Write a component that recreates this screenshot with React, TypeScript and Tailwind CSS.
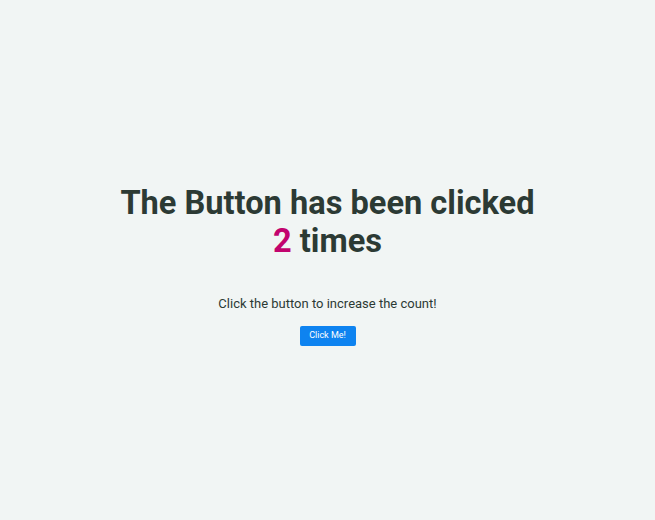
import { useState } from "react";

const App = () => {
  const [count, setCount] = useState(2);

  return (
    <main
      className="min-h-screen bg-[#f1f5f4] flex flex-col items-center justify-center pt-[10px] text-[#2c3a34]"
      style={{ fontFamily: "Roboto, 'Liberation Sans', sans-serif" }}
    >
      <h1 className="text-[32.6px] font-bold leading-[38px] text-center">
        The Button has been clicked
        <br />
        <span className="text-[#c2046e]">{count}</span> times
      </h1>
      <p className="mt-[34px] text-[13px] leading-5">
        Click the button to increase the count!
      </p>
      <button
        className="mt-[12px] h-[20px] w-[56px] rounded-[2px] bg-[#0e83f0] text-white text-[9px]"
        onClick={() => setCount(count + 1)}
      >
        Click Me!
      </button>
    </main>
  );
};

export default App;
